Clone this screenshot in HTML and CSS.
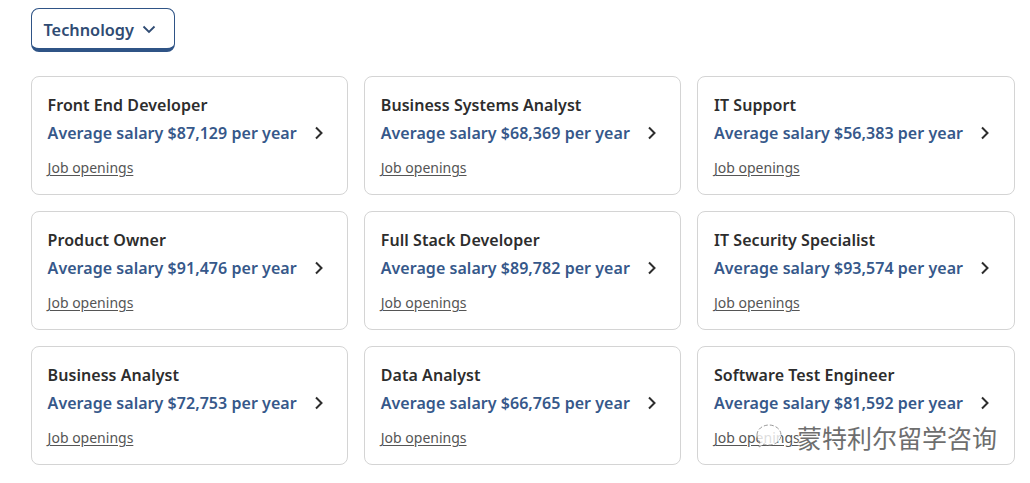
FILE: index.html
```html
<!DOCTYPE html>
<html lang="en">
<head>
<meta charset="utf-8">
<title>Technology salaries</title>
<link rel="stylesheet" href="styles.css">
</head>
<body>
<main class="page">
  <button class="dropdown" type="button">
    <span>Technology</span>
    <svg class="dropdown-icon" viewBox="0 0 14 9" width="14" height="9"><path d="M1.5 1.5 7 7l5.5-5.5"/></svg>
  </button>
  <section class="grid">
    <article class="card"><h3>Front End Developer</h3><div class="salary"><span>Average salary $87,129 per year</span><svg class="chev" viewBox="0 0 10 14" width="10" height="14"><path d="M2 1.5 7.5 7 2 12.5"/></svg></div><a class="link">Job openings</a></article>
    <article class="card"><h3>Business Systems Analyst</h3><div class="salary"><span>Average salary $68,369 per year</span><svg class="chev" viewBox="0 0 10 14" width="10" height="14"><path d="M2 1.5 7.5 7 2 12.5"/></svg></div><a class="link">Job openings</a></article>
    <article class="card"><h3>IT Support</h3><div class="salary"><span>Average salary $56,383 per year</span><svg class="chev" viewBox="0 0 10 14" width="10" height="14"><path d="M2 1.5 7.5 7 2 12.5"/></svg></div><a class="link">Job openings</a></article>
    <article class="card"><h3>Product Owner</h3><div class="salary"><span>Average salary $91,476 per year</span><svg class="chev" viewBox="0 0 10 14" width="10" height="14"><path d="M2 1.5 7.5 7 2 12.5"/></svg></div><a class="link">Job openings</a></article>
    <article class="card"><h3>Full Stack Developer</h3><div class="salary"><span>Average salary $89,782 per year</span><svg class="chev" viewBox="0 0 10 14" width="10" height="14"><path d="M2 1.5 7.5 7 2 12.5"/></svg></div><a class="link">Job openings</a></article>
    <article class="card"><h3>IT Security Specialist</h3><div class="salary"><span>Average salary $93,574 per year</span><svg class="chev" viewBox="0 0 10 14" width="10" height="14"><path d="M2 1.5 7.5 7 2 12.5"/></svg></div><a class="link">Job openings</a></article>
    <article class="card"><h3>Business Analyst</h3><div class="salary"><span>Average salary $72,753 per year</span><svg class="chev" viewBox="0 0 10 14" width="10" height="14"><path d="M2 1.5 7.5 7 2 12.5"/></svg></div><a class="link">Job openings</a></article>
    <article class="card"><h3>Data Analyst</h3><div class="salary"><span>Average salary $66,765 per year</span><svg class="chev" viewBox="0 0 10 14" width="10" height="14"><path d="M2 1.5 7.5 7 2 12.5"/></svg></div><a class="link">Job openings</a></article>
    <article class="card"><h3>Software Test Engineer</h3><div class="salary"><span>Average salary $81,592 per year</span><svg class="chev" viewBox="0 0 10 14" width="10" height="14"><path d="M2 1.5 7.5 7 2 12.5"/></svg></div><a class="link">Job openings</a></article>
  </section>
</main>
<div class="watermark">
  <svg class="wm-logo" viewBox="0 0 40 32" width="40" height="32"><path class="wm-halo" d="M9 14c0-6 6-10 12-10s12 4 12 10-6 10-12 10c-2 0-3 0-5-1l-5 3 1-5c-2-2-3-4-3-7z"/><path class="wm-line" d="M9 14c0-6 6-10 12-10s12 4 12 10-6 10-12 10c-2 0-3 0-5-1l-5 3 1-5c-2-2-3-4-3-7z"/></svg>
  <span>蒙特利尔留学咨询</span>
</div>
</body>
</html>
```
FILE: styles.css
```css
* { box-sizing: border-box; }
html, body { margin: 0; padding: 0; background: #fff; }
body { width: 1030px; height: 483px; overflow: hidden; position: relative; font-family: "Noto Sans", "Noto Sans CJK SC", sans-serif; }
.page { padding: 8px 15px 0 31px; }
.dropdown {
  display: flex; align-items: center; gap: 8.5px;
  width: 144px; height: 44px; padding: 2px 0 0 11.5px;
  background: #fff; border: 1px solid #2f5486; border-bottom: 4px solid #2f5486; border-radius: 8px;
  font: 600 16.3px/22px "Noto Sans", sans-serif; color: #2f4b73;
}
.dropdown-icon path { fill: none; stroke: #2f4b73; stroke-width: 1.8; }
.grid { display: grid; grid-template-columns: repeat(3, 317.3px); column-gap: 15.9px; row-gap: 16px; margin-top: 24px; }
.card {
  height: 119px; padding: 17px 15.6px 0;
  border: 1px solid #d4d4d4; border-radius: 8px; background: #fff;
}
.card h3 { margin: 0; font: 600 16px/22px "Noto Sans", sans-serif; color: #2d2d2d; letter-spacing: .05px; }
.salary { display: flex; align-items: center; justify-content: space-between; margin-top: 6px; padding-right: 8px; font: 600 16px/22px "Noto Sans", sans-serif; color: #36588a; letter-spacing: .04px; }
.chev path { fill: none; stroke: #2d2d2d; stroke-width: 2; }
.link { display: inline-block; margin-top: 14px; font: 400 14px/20px "Noto Sans", sans-serif; color: #555; text-decoration: underline; text-underline-offset: 2px; }
.watermark { position: absolute; left: 748px; top: 420px; display: flex; align-items: center; gap: 9px; color: #6e6e6e; font: 400 25px/34px "Noto Sans CJK SC", sans-serif; text-shadow: 0 0 2px #fff, 0 0 2px #fff, 0 0 3px #fff; }
.wm-logo { flex: none; }
.wm-halo { fill: #fff; fill-opacity: .8; stroke: none; }
.wm-line { fill: none; stroke: #999; stroke-width: 1; stroke-dasharray: 4 2; }
```
